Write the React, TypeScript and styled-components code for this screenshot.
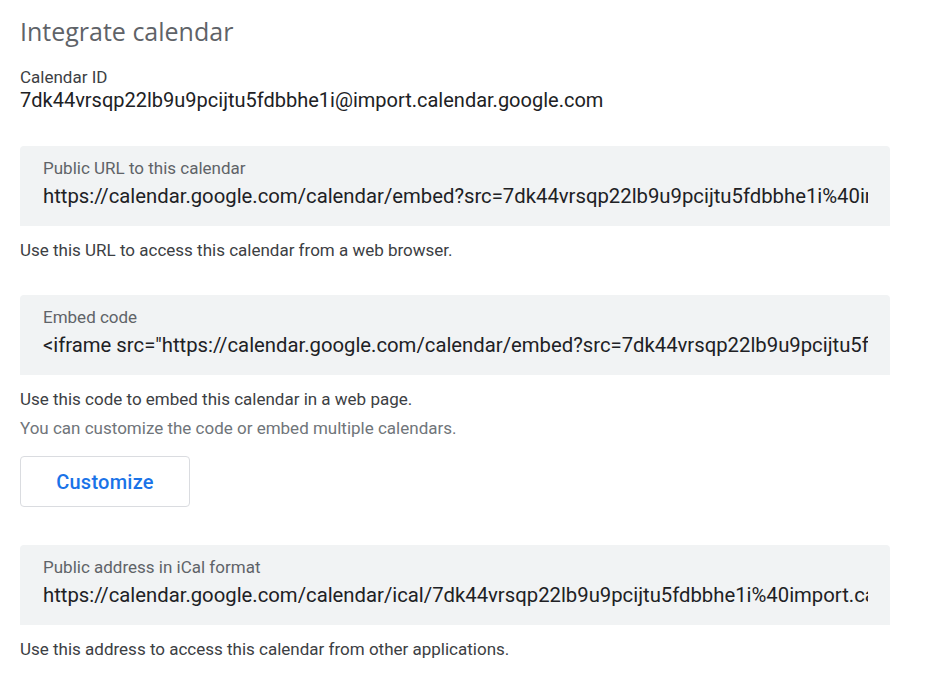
import React from "react";
import styled, { createGlobalStyle } from "styled-components";

const GlobalStyle = createGlobalStyle`
  body {
    margin: 0;
    background: #fff;
    font-family: Roboto, "Liberation Sans", Arial, sans-serif;
    color: #202124;
  }
`;

interface UrlFieldProps {
  label: string;
  value: string;
}

const UrlField = ({ label, value }: UrlFieldProps) => (
  <FieldBox>
    <FieldLabel>{label}</FieldLabel>
    <FieldValue>{value}</FieldValue>
  </FieldBox>
);

export default function App() {
  return (
    <>
      <GlobalStyle />
      <Page>
        <Title>Integrate calendar</Title>
        <IdBlock>
          <IdLabel>Calendar ID</IdLabel>
          <IdValue>7dk44vrsqp22lb9u9pcijtu5fdbbhe1i@import.calendar.google.com</IdValue>
        </IdBlock>

        <Section>
          <UrlField
            label="Public URL to this calendar"
            value="https://calendar.google.com/calendar/embed?src=7dk44vrsqp22lb9u9pcijtu5fdbbhe1i%40import.calendar.google.com&ctz=America%2FLos_Angeles"
          />
          <Helper>Use this URL to access this calendar from a web browser.</Helper>
        </Section>

        <Section>
          <UrlField
            label="Embed code"
            value={'<iframe src="https://calendar.google.com/calendar/embed?src=7dk44vrsqp22lb9u9pcijtu5fdbbhe1i%40import.calendar.google.com" style="border: 0" width="800" height="600" frameborder="0" scrolling="no"></iframe>'}
          />
          <Helper>Use this code to embed this calendar in a web page.</Helper>
          <Helper muted>You can customize the code or embed multiple calendars.</Helper>
          <CustomizeButton>Customize</CustomizeButton>
        </Section>

        <Section>
          <UrlField
            label="Public address in iCal format"
            value="https://calendar.google.com/calendar/ical/7dk44vrsqp22lb9u9pcijtu5fdbbhe1i%40import.calendar.google.com/public/basic.ics"
          />
          <Helper>Use this address to access this calendar from other applications.</Helper>
        </Section>
      </Page>
    </>
  );
}

const Page = styled.main`
  padding: 15px 46px 20px 20px;
  display: flex;
  flex-direction: column;
`;

const Title = styled.h2`
  margin: 0;
  font-family: "Open Sans", Roboto, sans-serif;
  font-size: 25px;
  font-weight: 400;
  line-height: 32px;
  color: #5f6368;
`;

const IdBlock = styled.div`
  margin-top: 19px;
  display: flex;
  flex-direction: column;
`;

const IdLabel = styled.span`
  font-size: 17px;
  line-height: 22px;
  color: #3c4043;
`;

const IdValue = styled.span`
  font-size: 20px;
  line-height: 24px;
  color: #202124;
`;

const Section = styled.section`
  margin-top: 34px;
  display: flex;
  flex-direction: column;
  align-items: flex-start;
`;

const FieldBox = styled.div`
  align-self: stretch;
  height: 80px;
  box-sizing: border-box;
  padding: 12px 22px 0 23px;
  background: #f1f3f4;
  border-radius: 4px 4px 0 0;
  overflow: hidden;
`;

const FieldLabel = styled.div`
  font-size: 17px;
  line-height: 20px;
  color: #5f6368;
`;

const FieldValue = styled.div`
  margin-top: 6px;
  font-size: 20.3px;
  line-height: 24px;
  color: #202124;
  white-space: nowrap;
  overflow: hidden;
`;

const Helper = styled.p<{ muted?: boolean }>`
  margin: ${(p) => (p.muted ? "7px" : "13px")} 0 0;
  font-size: 17px;
  line-height: 22px;
  color: ${(p) => (p.muted ? "#70757a" : "#3c4043")};
`;

const CustomizeButton = styled.button`
  margin: 17px 0 4px;
  width: 170px;
  height: 51px;
  background: #fff;
  border: 1px solid #dadce0;
  border-radius: 4px;
  font-family: Roboto, sans-serif;
  font-size: 20px;
  font-weight: 500;
  letter-spacing: 0.25px;
  color: #1a73e8;
  cursor: pointer;
`;
